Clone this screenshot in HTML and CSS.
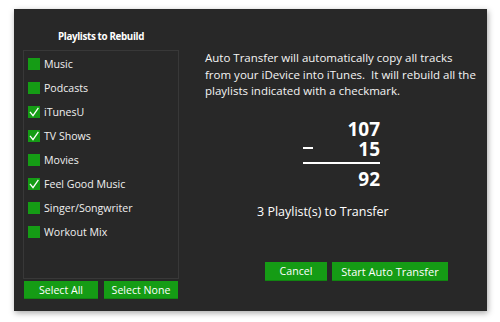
FILE: index.html
```html
<!DOCTYPE html>
<html>
<head>
<meta charset="utf-8">
<link rel="stylesheet" href="styles.css">
</head>
<body>
<div class="window">
  <div class="left">
    <div class="title">Playlists to Rebuild</div>
    <div class="listbox">
      <div class="item"><span class="box"></span><span class="label">Music</span></div>
      <div class="item"><span class="box"></span><span class="label">Podcasts</span></div>
      <div class="item"><span class="box checked"><svg viewBox="0 0 12 12" width="12" height="12"><path d="M2 5.8 L5 9.6 L10.4 1.8" fill="none" stroke="#fff" stroke-width="1.3"/></svg></span><span class="label">iTunesU</span></div>
      <div class="item"><span class="box checked"><svg viewBox="0 0 12 12" width="12" height="12"><path d="M2 5.8 L5 9.6 L10.4 1.8" fill="none" stroke="#fff" stroke-width="1.3"/></svg></span><span class="label">TV Shows</span></div>
      <div class="item"><span class="box"></span><span class="label">Movies</span></div>
      <div class="item"><span class="box checked"><svg viewBox="0 0 12 12" width="12" height="12"><path d="M2 5.8 L5 9.6 L10.4 1.8" fill="none" stroke="#fff" stroke-width="1.3"/></svg></span><span class="label">Feel Good Music</span></div>
      <div class="item"><span class="box"></span><span class="label">Singer/Songwriter</span></div>
      <div class="item"><span class="box"></span><span class="label">Workout Mix</span></div>
    </div>
    <div class="sel-buttons">
      <div class="btn sel">Select All</div>
      <div class="btn sel">Select None</div>
    </div>
  </div>
  <div class="right">
    <p class="desc">Auto Transfer will automatically copy all tracks<br>from your iDevice into iTunes.&nbsp; It will rebuild all the playlists indicated with a checkmark.</p>
    <div class="calc">
      <div class="num">107</div>
      <div class="num minus-row"><span class="minus"></span><span>15</span></div>
      <div class="rule"></div>
      <div class="num">92</div>
    </div>
    <div class="status">3 Playlist(s) to Transfer</div>
    <div class="actions">
      <div class="btn cancel">Cancel</div>
      <div class="btn start">Start Auto Transfer</div>
    </div>
  </div>
</div>
</body>
</html>
```
FILE: styles.css
```css
html, body {
  margin: 0;
  padding: 0;
  background: #ffffff;
}
body {
  width: 500px;
  height: 322px;
  overflow: hidden;
  font-family: "Open Sans", "Noto Sans", sans-serif;
  color: #ffffff;
}
.window {
  margin: 9px 0 0 14px;
  width: 473px;
  height: 302px;
  background: #282828;
  box-shadow: 1px 2px 6px rgba(0, 0, 0, 0.35);
  display: flex;
  box-sizing: border-box;
}
.left {
  margin-left: 9px;
  width: 156px;
  display: flex;
  flex-direction: column;
}
.title {
  height: 41px;
  box-sizing: border-box;
  padding-top: 20px;
  text-align: center;
  font-size: 9.8px;
  font-weight: bold;
  letter-spacing: -0.35px;
  line-height: 16px;
}
.listbox {
  height: 229px;
  box-sizing: border-box;
  border: 1px solid #383838;
  padding: 7px 0 0 4px;
}
.item {
  height: 24px;
  display: flex;
  align-items: flex-start;
}
.box {
  width: 12px;
  height: 12px;
  background: #159c15;
  flex: none;
  display: block;
}
.box svg {
  display: block;
}
.label {
  margin-left: 4px;
  font-size: 10.6px;
  line-height: 12px;
  color: #f0f0f0;
}
.sel-buttons {
  display: flex;
  gap: 6px;
  margin: 2px 0 0 1px;
}
.btn {
  background: #159c15;
  color: #ffffff;
  text-align: center;
  font-size: 10.6px;
  line-height: 18px;
  height: 18px;
  box-shadow: inset 0 -1px 0 rgba(0,0,0,0.15);
}
.sel {
  width: 74px;
}
.right {
  flex: 1;
  padding-left: 26px;
  display: flex;
  flex-direction: column;
}
.desc {
  margin: 41px 0 0 0;
  width: 275px;
  font-size: 11.5px;
  line-height: 16.5px;
  color: #f4f4f4;
}
.calc {
  margin: 19px 0 0 98px;
  width: 77px;
  display: flex;
  flex-direction: column;
}
.num {
  font-size: 19px;
  font-weight: bold;
  line-height: 20px;
  text-align: right;
}
.minus-row {
  display: flex;
  justify-content: space-between;
  align-items: center;
}
.minus {
  display: block;
  width: 10px;
  height: 2px;
  background: #ffffff;
  margin-top: -2px;
}
.rule {
  height: 2px;
  background: #ffffff;
  margin: 3px 0 5px 0;
}
.status {
  margin: 15px 0 0 52px;
  font-size: 12.5px;
  line-height: 16px;
}
.actions {
  margin: 42px 0 0 60px;
  display: flex;
  gap: 5px;
}
.cancel {
  width: 62px;
  height: 19px;
  line-height: 19px;
}
.start {
  width: 116px;
  height: 19px;
  line-height: 19px;
  font-size: 11px;
}
```
